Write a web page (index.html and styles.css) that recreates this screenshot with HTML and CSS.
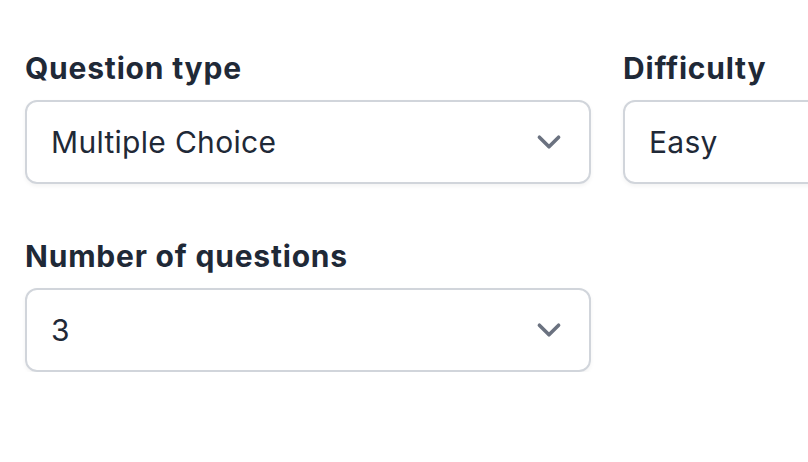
FILE: index.html
```html
<!DOCTYPE html>
<html lang="en">
<head>
    <meta charset="UTF-8">
    <meta name="viewport" content="width=device-width, initial-scale=1.0">
    <title>Quiz settings</title>
    <link rel="stylesheet" href="styles.css">
</head>
<body>
    <div class="settings">
        <div class="field">
            <label class="label">Question type</label>
            <div class="select">
                <span>Multiple Choice</span>
                <svg class="chevron" viewBox="0 0 20 20" fill="none"><path d="M6 8l4 4 4-4" stroke="#6b7280" stroke-width="1.5" stroke-linecap="round" stroke-linejoin="round"/></svg>
            </div>
        </div>
        <div class="field">
            <label class="label">Difficulty</label>
            <div class="select">
                <span>Easy</span>
                <svg class="chevron" viewBox="0 0 20 20" fill="none"><path d="M6 8l4 4 4-4" stroke="#6b7280" stroke-width="1.5" stroke-linecap="round" stroke-linejoin="round"/></svg>
            </div>
        </div>
        <div class="field">
            <label class="label">Number of questions</label>
            <div class="select">
                <span>3</span>
                <svg class="chevron" viewBox="0 0 20 20" fill="none"><path d="M6 8l4 4 4-4" stroke="#6b7280" stroke-width="1.5" stroke-linecap="round" stroke-linejoin="round"/></svg>
            </div>
        </div>
    </div>
</body>
</html>
```

FILE: styles.css
```css
html, body {
    margin: 0;
    overflow: hidden;
    background: #ffffff;
}
body {
    font-family: Inter, "Noto Sans", sans-serif;
    color: #1f2937;
}
.settings {
    display: grid;
    grid-template-columns: 566px 566px;
    column-gap: 32px;
    row-gap: 52px;
    padding: 48px 0 0 25px;
    width: 1200px;
}
.label {
    display: block;
    font-size: 30px;
    line-height: 40px;
    font-weight: 700;
    letter-spacing: 0.8px;
    color: #1f2937;
    margin-bottom: 12px;
}
.select {
    display: flex;
    align-items: center;
    justify-content: space-between;
    box-sizing: border-box;
    height: 84px;
    padding: 0 16px 0 24px;
    border: 2px solid #d1d5db;
    border-radius: 12px;
    box-shadow: 0 2px 4px rgba(0, 0, 0, 0.05);
    font-size: 30px;
    letter-spacing: 0.3px;
    color: #1f2937;
}
.chevron {
    width: 48px;
    height: 48px;
}
```
